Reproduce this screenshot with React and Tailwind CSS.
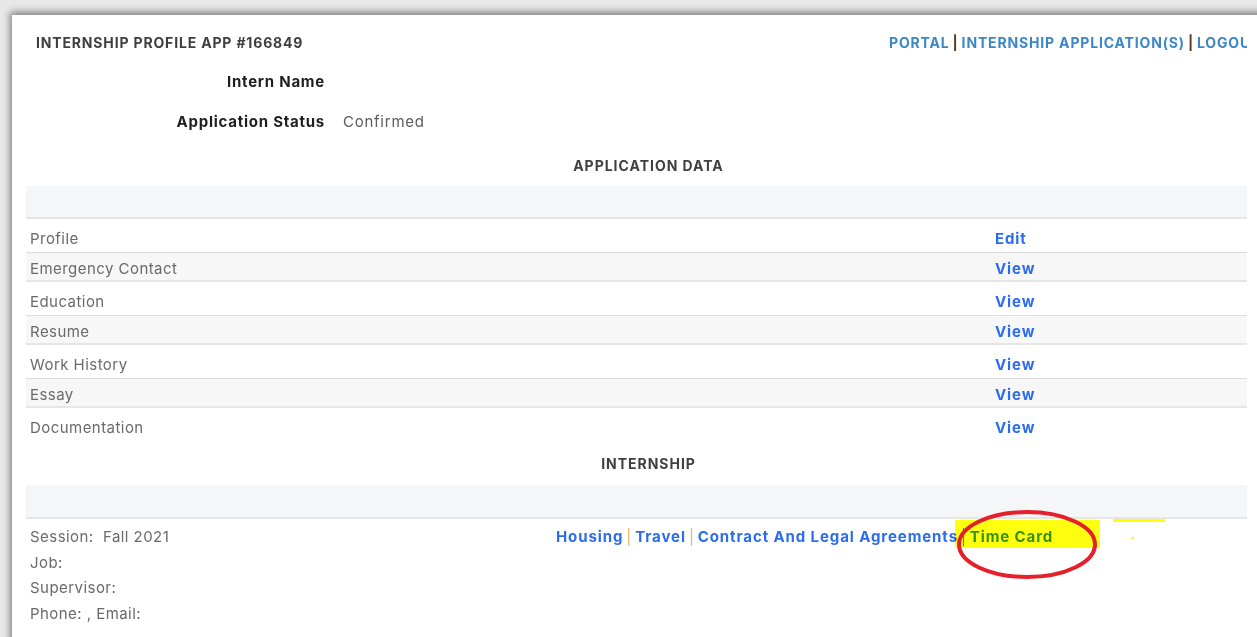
const dataRows = [
  { label: "Profile", action: "Edit", shaded: false },
  { label: "Emergency Contact", action: "View", shaded: true },
  { label: "Education", action: "View", shaded: false },
  { label: "Resume", action: "View", shaded: true },
  { label: "Work History", action: "View", shaded: false },
  { label: "Essay", action: "View", shaded: true },
  { label: "Documentation", action: "View", shaded: false },
];

function DataRow({ label, action, shaded }) {
  if (shaded) {
    return (
      <div className="grid grid-cols-[965px_1fr] h-[30px] items-start pt-[6px] px-1 bg-[#f7f7f8] border-t border-dotted border-[#dcdcdc] border-b-2 border-b-[#e6e6e6] border-solid">
        <span className="leading-5">{label}</span>
        <a className="leading-5 font-bold text-[15px] tracking-[0.06em] text-[#2c6cf0]">{action}</a>
      </div>
    );
  }
  return (
    <div className="grid grid-cols-[965px_1fr] h-[33px] items-start pt-[10px] px-1">
      <span className="leading-5">{label}</span>
      <a className="leading-5 font-bold text-[15px] tracking-[0.06em] text-[#2c6cf0]">{action}</a>
    </div>
  );
}

function Sep({ className }) {
  return <span className={"mx-[3px] " + className}>|</span>;
}

export default function App() {
  return (
    <div className="h-screen overflow-hidden bg-[#e8e8e8] pl-[12px] pt-[15px] font-['Inter','Liberation_Sans',sans-serif]">
      <div className="relative isolate h-[640px] w-[1260px] pt-[18px] bg-white shadow-[-2px_-3px_7px_rgba(0,0,0,0.45)] text-[15px] tracking-[0.03em] text-[#6a6a6a]">
        {/* header */}
        <div className="grid grid-cols-[877px_358px] h-[20px] items-center leading-5">
          <span className="pl-[24px] font-bold text-[14px] tracking-[0.06em] text-[#3f3f3f]">INTERNSHIP PROFILE APP #166849</span>
          <div className="overflow-hidden whitespace-nowrap font-bold text-[14px] tracking-[0.06em] text-[#3d87c6]">
            PORTAL<Sep className="text-[#5a3b1c]" />INTERNSHIP APPLICATION(S)<Sep className="text-[#5a3b1c]" />LOGOUT
          </div>
        </div>

        {/* name / status */}
        <div className="grid grid-cols-[299px_1fr] gap-x-[18px] ml-[14px] mt-[19px] leading-5">
          <span className="text-right font-bold tracking-[0.05em] text-[#1e1e1e]">Intern Name</span>
          <span></span>
        </div>
        <div className="grid grid-cols-[299px_1fr] gap-x-[18px] ml-[14px] mt-[20px] leading-5">
          <span className="text-right font-bold tracking-[0.05em] text-[#1e1e1e]">Application Status</span>
          <span className="tracking-[0.05em] text-[#5c5c5c]">Confirmed</span>
        </div>

        {/* application data */}
        <div className="w-[1221px] ml-[14px]">
          <div className="mt-[24px] pl-[24px] text-center font-bold text-[14px] tracking-[0.07em] leading-5 text-[#404040]">APPLICATION DATA</div>
          <div className="mt-[10px] h-[33px] bg-[#f5f6f8] border-b-2 border-[#e6e6e6]"></div>
          {dataRows.map((r) => (
            <DataRow key={r.label} {...r} />
          ))}

          {/* internship */}
          <div className="mt-[13px] pl-[24px] text-center font-bold text-[14px] tracking-[0.07em] leading-5 text-[#404040]">INTERNSHIP</div>
          <div className="mt-[11px] h-[34px] bg-[#f5f6f8] border-b-2 border-[#e6e6e6]"></div>
          <div className="grid grid-cols-[526px_1fr] px-1 pt-[5px]">
            <div className="leading-[25.5px]">
              <div>Session:&nbsp; Fall 2021</div>
              <div>Job:</div>
              <div>Supervisor:</div>
              <div>Phone: , Email:</div>
            </div>
            <div className="leading-[25px] font-bold text-[15px] tracking-[0.06em] text-[#2c6cf0] whitespace-nowrap">
              Housing<Sep className="font-normal text-[#f2b35a]" />Travel<Sep className="font-normal text-[#f2b35a]" />Contract And Legal Agreements<Sep className="font-normal text-[#6a8a50]" /><span className="text-[#38921c]">Time Card</span>
            </div>
          </div>
        </div>

        {/* highlighter marks */}
        <div className="absolute left-[943px] top-[505px] w-[145px] h-[28px] bg-[#ffff10] mix-blend-multiply"></div>
        <div className="absolute left-[1101px] top-[504px] w-[52px] h-[3px] bg-[#ffff00]"></div>
        <div className="absolute left-[1119px] top-[522px] w-[3px] h-[2px] bg-[#ffff00]"></div>
        <svg className="absolute left-[943px] top-[493px]" width="144" height="73" viewBox="0 0 144 73">
          <ellipse cx="72" cy="36.5" rx="68" ry="32.5" fill="none" stroke="#e5202a" strokeWidth="4" />
        </svg>
      </div>
    </div>
  );
}
